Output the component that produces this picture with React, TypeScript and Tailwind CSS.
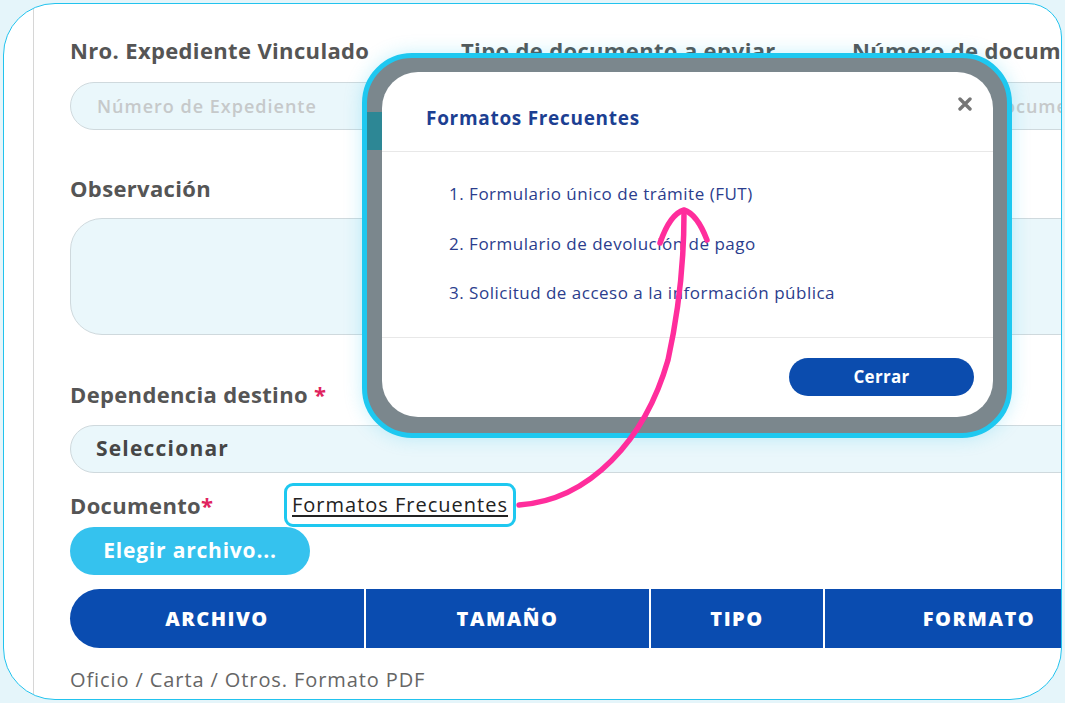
import { ReactNode } from 'react';

const labelCls = 'text-[22px] font-bold leading-[28px] tracking-[0.35px] text-[#555] whitespace-nowrap';

function Field({ label, children }: { label: ReactNode; children: ReactNode }) {
  return (
    <div className="flex flex-col">
      <div className={labelCls}>{label}</div>
      {children}
    </div>
  );
}

function TextInput({ placeholder }: { placeholder: string }) {
  return (
    <div className="mt-[18px] flex h-[48px] items-center rounded-full border border-[#cfd9dd] bg-[#eaf7fb] px-[26px] text-[18px] font-semibold tracking-[1px] text-[#c6c9ca] whitespace-nowrap">
      {placeholder}
    </div>
  );
}

function Box() {
  return <div className="mt-[16px] h-[117px] rounded-[32px] border border-[#cfd9dd] bg-[#eaf7fb]" />;
}

function FormatsModal() {
  const items = [
    '1. Formulario único de trámite (FUT)',
    '2. Formulario de devolución de pago',
    '3. Solicitud de acceso a la información pública',
  ];
  return (
    <div className="absolute left-[362px] top-[53px] h-[385px] w-[650px] rounded-[50px] border-[5px] border-[#1ec8f0] bg-[#7b878d] pb-[16px] pl-[15px] pr-[14px] pt-[14px] shadow-[0_0_18px_rgba(30,200,240,0.25)]">
      {/* bits of the page peeking through the backdrop */}
      <div className="absolute left-0 top-[54px] h-[38px] w-[15px] bg-[#2d8795]" />
      <div className="flex h-full flex-col overflow-hidden rounded-[36px] bg-white">
        {/* header */}
        <div className="relative h-[80px] shrink-0 border-b border-[#e8e8e8] pl-[44px] pt-[32px]">
          <div className="text-[19px] font-bold leading-[28px] tracking-[0.7px] text-[#1c3f92]">Formatos Frecuentes</div>
          <svg className="absolute right-[21px] top-[25px]" width="14" height="14" viewBox="0 0 14 14">
            <path d="M2 2 L12 12 M12 2 L2 12" stroke="#767676" strokeWidth="3.4" strokeLinecap="round" />
          </svg>
        </div>
        {/* list */}
        <div className="flex h-[186px] shrink-0 flex-col gap-[25.5px] border-b border-[#e8e8e8] pl-[67px] pt-[30px]">
          {items.map((it) => (
            <div key={it} className="text-[17px] leading-[24px] tracking-[0.5px] text-[#2b3d8d] whitespace-nowrap">
              {it}
            </div>
          ))}
        </div>
        {/* footer */}
        <div className="flex flex-1 items-start justify-end pr-[19px] pt-[20px]">
          <div className="flex h-[38px] w-[185px] items-center justify-center rounded-full bg-[#0b4cae] text-[17px] font-bold tracking-[0.3px] text-white">
            Cerrar
          </div>
        </div>
      </div>
    </div>
  );
}

function Arrow() {
  return (
    <svg className="pointer-events-none absolute left-0 top-0" width="1065" height="703" viewBox="0 0 1065 703">
      <path
        d="M519 505 C590 500 645 440 668 360 C679 310 684 260 684 213"
        fill="none"
        stroke="#ff2d9c"
        strokeWidth="5.5"
        strokeLinecap="round"
      />
      <path
        d="M660 243 Q670 214 684 210 Q697 214 707 240"
        fill="none"
        stroke="#ff2d9c"
        strokeWidth="5.5"
        strokeLinecap="round"
        strokeLinejoin="round"
      />
    </svg>
  );
}

export default function App() {
  const cols = [
    { name: 'ARCHIVO', w: 'w-[294px] rounded-l-full' },
    { name: 'TAMAÑO', w: 'w-[283px]' },
    { name: 'TIPO', w: 'w-[172px]' },
    { name: 'FORMATO', w: 'w-[308px]' },
  ];

  return (
    <div className="relative h-[703px] w-[1065px] overflow-hidden bg-[#e5f5fa] p-[3px] font-['Open_Sans',sans-serif]">
      <div className="h-full overflow-hidden rounded-[52px] rounded-tr-[34px] border border-[#22c3ee] bg-white pl-[29px]">
        <div className="h-full border-l border-[#d6d6d6] pl-[36px] pt-[32px]">
          {/* row 1 */}
          <div className="grid w-[1143px] grid-cols-3 gap-x-[30px]">
            <Field label="Nro. Expediente Vinculado">
              <TextInput placeholder="Número de Expediente" />
            </Field>
            <Field label="Tipo de documento a enviar">
              <TextInput placeholder="Seleccionar" />
            </Field>
            <Field label="Número de documento">
              <TextInput placeholder="Número de documento" />
            </Field>
          </div>

          {/* row 2 */}
          <div className="mt-[44px] grid w-[1143px] grid-cols-3 gap-x-[30px]">
            <Field label="Observación">
              <Box />
            </Field>
            <Field label="Remitente">
              <Box />
            </Field>
            <Field label="Asunto">
              <Box />
            </Field>
          </div>

          {/* dependencia */}
          <div className="mt-[45px]">
            <div className={labelCls}>
              Dependencia destino <span className="text-[#e0245e]">*</span>
            </div>
            <div className="mt-[17px] flex h-[48px] w-[1100px] items-center rounded-full border border-[#cfd9dd] bg-[#eaf7fb] px-[25px] text-[21px] font-bold tracking-[1.2px] text-[#464646]">
              Seleccionar
            </div>
          </div>

          {/* documento */}
          <div className="mt-[18px] flex h-[28px] items-center">
            <div className={`${labelCls} w-[214px]`}>
              Documento<span className="text-[#e0245e]">*</span>
            </div>
            <span className="-my-[8px] rounded-[9px] border-[3px] border-[#1ec8f0] bg-white px-[5px] py-[5px] text-[20px] font-medium leading-[28px] tracking-[1px] text-[#222] underline underline-offset-[3px] whitespace-nowrap">
              Formatos Frecuentes
            </span>
          </div>

          <div className="mt-[8px] flex h-[48px] w-[240px] items-center justify-center rounded-full bg-[#35c2ee] text-[21px] font-bold tracking-[0.8px] text-white">
            Elegir archivo...
          </div>

          {/* table header */}
          <div className="mt-[14px] flex h-[59px] gap-[2px]">
            {cols.map((c) => (
              <div
                key={c.name}
                className={`${c.w} flex shrink-0 items-center justify-center bg-[#0a4cb0] text-[20px] font-extrabold tracking-[1.5px] text-white`}
              >
                {c.name}
              </div>
            ))}
          </div>

          <div className="mt-[18px] text-[20px] font-medium leading-[28px] tracking-[0.9px] text-[#666] whitespace-nowrap">
            Oficio / Carta / Otros. Formato PDF
          </div>
        </div>
      </div>

      <FormatsModal />
      <Arrow />
    </div>
  );
}
